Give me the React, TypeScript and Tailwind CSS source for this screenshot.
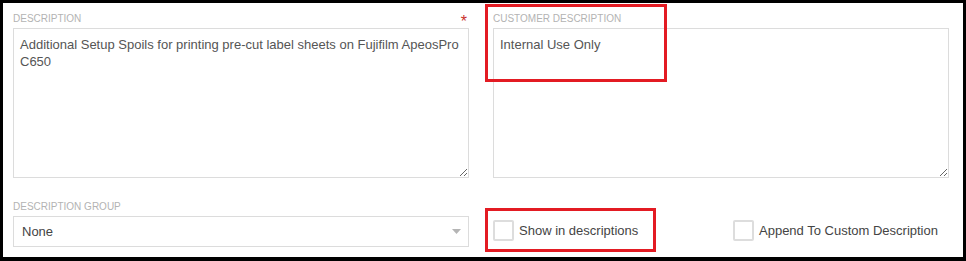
import { useState } from 'react'

// description settings panel (line item form)
export default function App() {
  const [desc, setDesc] = useState(
    'Additional Setup Spoils for printing pre-cut label sheets on Fujifilm ApeosPro C650'
  )
  const [custDesc, setCustDesc] = useState('Internal Use Only')
  const [showInDesc, setShowInDesc] = useState(false)
  const [appendCustom, setAppendCustom] = useState(false)

  const labelCls = 'block text-[10px] leading-[12px] uppercase text-[#b3b3b3]'

  return (
    <div className="w-[966px] h-[261px] bg-black pt-[3px] px-[3px] pb-[4px] font-['Liberation_Sans',Arial,sans-serif]">
      <div className="relative h-full bg-white pt-[10px] pl-[10px] pr-[14px]">
        <div className="grid grid-cols-2 gap-x-6">
          {/* DESCRIPTION */}
          <div>
            <div className="flex justify-between items-start h-[12px] mb-[3px]">
              <label className={labelCls}>Description</label>
              <span className="text-[#c9302c] text-[16px] leading-[12px] mr-[2px] mt-[3px]">*</span>
            </div>
            <textarea
              value={desc}
              onChange={e => setDesc(e.target.value)}
              className="block w-full h-[150px] border border-[#dcdcdc] px-[6px] pt-[7px] pb-[6px] text-[13px] leading-[17px] text-[#555] outline-none"
            />
          </div>

          {/* CUSTOMER DESCRIPTION */}
          <div>
            <div className="h-[12px] mb-[3px]">
              <label className={labelCls}>Customer Description</label>
            </div>
            <textarea
              value={custDesc}
              onChange={e => setCustDesc(e.target.value)}
              className="block w-full h-[150px] border border-[#dcdcdc] px-[6px] pt-[7px] pb-[6px] text-[13px] leading-[17px] text-[#555] outline-none"
            />
          </div>

          {/* DESCRIPTION GROUP */}
          <div className="mt-[23px]">
            <label className={labelCls + ' mb-[3px]'}>Description Group</label>
            <div className="flex items-center justify-between h-[31px] border border-[#dcdcdc] pl-[8px] pr-[7px] text-[13px] text-[#444]">
              <span>None</span>
              <svg width="9" height="5" viewBox="0 0 9 5">
                <path d="M0 0 H9 L4.5 5 Z" fill="#b5b5b5" />
              </svg>
            </div>
          </div>

          <div className="mt-[23px] pt-[19px] flex items-start">
            <label className="flex items-center w-[240px] cursor-pointer">
              <input
                type="checkbox"
                checked={showInDesc}
                onChange={e => setShowInDesc(e.target.checked)}
                className="appearance-none w-[21px] h-[21px] border-2 border-[#dddddd] rounded-[2px] bg-white"
              />
              <span className="ml-[5px] text-[13px] text-[#444]">Show in descriptions</span>
            </label>
            <label className="flex items-center cursor-pointer">
              <input
                type="checkbox"
                checked={appendCustom}
                onChange={e => setAppendCustom(e.target.checked)}
                className="appearance-none w-[21px] h-[21px] border-2 border-[#dddddd] rounded-[2px] bg-white"
              />
              <span className="ml-[5px] text-[13px] text-[#444]">Append To Custom Description</span>
            </label>
          </div>
        </div>

        {/* review annotations */}
        <div className="absolute left-[482px] top-[1px] w-[182px] h-[78px] border-[3px] border-[#e31b23] pointer-events-none" />
        <div className="absolute left-[482px] top-[205px] w-[171px] h-[44px] border-[3px] border-[#e31b23] pointer-events-none" />
      </div>
    </div>
  )
}
